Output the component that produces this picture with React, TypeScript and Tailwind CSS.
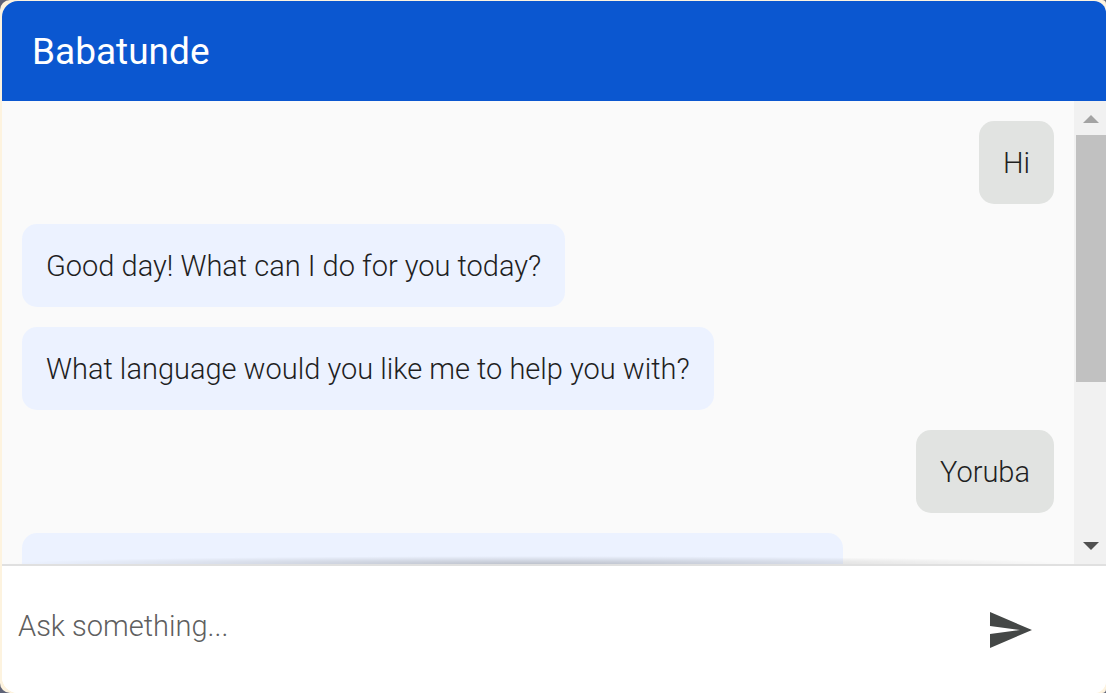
import { useState } from "react";

type Message = { from: "user" | "bot"; text: string };

const messages: Message[] = [
  { from: "user", text: "Hi" },
  { from: "bot", text: "Good day! What can I do for you today?" },
  { from: "bot", text: "What language would you like me to help you with?" },
  { from: "user", text: "Yoruba" },
];

function Bubble({ from, text }: Message) {
  const tone = from === "user" ? "self-end bg-[#e1e3e1]" : "self-start bg-[#ecf2ff]";
  return (
    <li className={`${tone} shrink-0 rounded-[15px] px-6 pt-[26px] pb-[25px] text-[29px] leading-8 font-light text-[#1f1f1f]`}>
      {text}
    </li>
  );
}

function Scrollbar() {
  return (
    <div aria-hidden="true" className="flex w-8 shrink-0 flex-col bg-[#f1f1f1] pl-[2px]">
      <svg className="h-[34px] w-full shrink-0" viewBox="0 0 30 34">
        <path d="M7 22 15 14l8 8z" fill="#a3a3a3" />
      </svg>
      <div className="flex-1">
        <div className="h-[62.5%] bg-[#c1c1c1]" />
      </div>
      <svg className="h-[34px] w-full shrink-0" viewBox="0 0 30 34">
        <path d="M7 12h16l-8 8z" fill="#505050" />
      </svg>
    </div>
  );
}

export default function App() {
  const [draft, setDraft] = useState("");
  return (
    <div className="h-screen bg-[#5f6377]">
      <div className="h-full rounded-l-[10px] rounded-r-[4px] bg-[#fdf3df] pt-px pl-[2px]">
        <main className="flex h-full flex-col overflow-hidden rounded-l-[16px] rounded-r-[12px] bg-white font-['Roboto',sans-serif]">
          <header className="flex h-[100px] shrink-0 items-center bg-[#0b57d0] px-[30px] pt-[2px]">
            <h1 className="text-[37px] leading-10 text-white">Babatunde</h1>
          </header>
          <section className="relative flex min-h-0 flex-1 bg-[#fafafa]">
            <ul className="flex min-w-0 flex-1 flex-col gap-5 overflow-hidden p-5">
              {messages.map((m) => (
                <Bubble key={m.text} {...m} />
              ))}
              <li className="h-[83px] w-[821px] max-w-full shrink-0 self-start rounded-[15px] bg-[#ecf2ff]" />
            </ul>
            <div className="pointer-events-none absolute inset-x-0 bottom-0 mr-8 h-2 bg-[radial-gradient(farthest-side_at_50%_100%,rgba(0,0,0,0.2),transparent)]" />
            <Scrollbar />
          </section>
          <form
            onSubmit={(e) => e.preventDefault()}
            className="flex h-[129px] shrink-0 items-center border-t-2 border-[#e0e0e0] bg-white pr-[72px] pl-4"
          >
            <input
              aria-label="Ask something"
              placeholder="Ask something..."
              value={draft}
              onChange={(e) => setDraft(e.target.value)}
              className="mb-2 min-w-0 flex-1 bg-transparent text-[29px] leading-8 font-light text-[#1f1f1f] outline-none placeholder:text-[#5f5f5f]"
            />
            <button type="submit" aria-label="Send" className="p-0">
              <svg className="h-12 w-12" viewBox="0 0 24 24" fill="#444746">
                <path d="M2.01 21 23 12 2.01 3 2 10l15 2-15 2z" />
              </svg>
            </button>
          </form>
        </main>
      </div>
    </div>
  );
}
